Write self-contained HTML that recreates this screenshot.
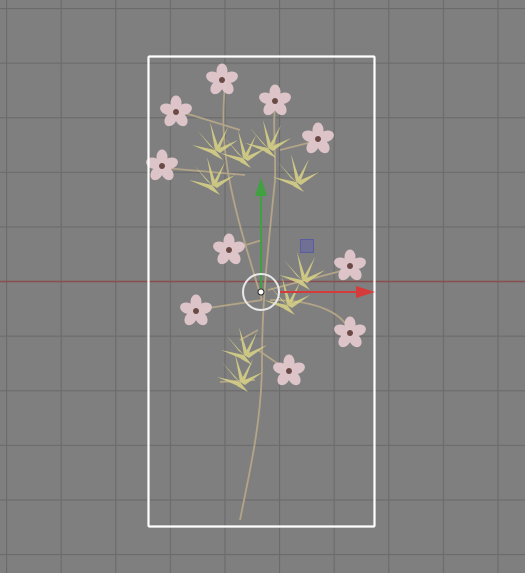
<!DOCTYPE html>
<html><head><style>
html,body{margin:0;padding:0;width:525px;height:573px;overflow:hidden;background:#7f7f7f}
</style></head><body>
<svg width="525" height="573" viewBox="0 0 525 573" xmlns="http://www.w3.org/2000/svg">
<defs>
<pattern id="g" x="6" y="8" width="54.6" height="54.6" patternUnits="userSpaceOnUse">
<path d="M0.5 0V54.6M0 0.5H54.6" stroke="#6b6b6b" stroke-width="1.3" fill="none"/>
</pattern>
<g id="fl"><g fill="#e2c8cd" opacity="0.95">
<ellipse cx="0" cy="-9" rx="5.5" ry="7.5"/><ellipse cx="0" cy="-9" rx="5.5" ry="7.5" transform="rotate(72)"/><ellipse cx="0" cy="-9" rx="5.5" ry="7.5" transform="rotate(144)"/><ellipse cx="0" cy="-9" rx="5.5" ry="7.5" transform="rotate(216)"/><ellipse cx="0" cy="-9" rx="5.5" ry="7.5" transform="rotate(288)"/></g>
<circle r="3" fill="#6b4a45"/></g>
<g id="sp" fill="#d6cf86" opacity="0.9">
<path d="M0 0L-18 -20L-5 -4Z"/><path d="M0 0L-5 -28L3 -4Z"/><path d="M0 0L13 -23L5 -2Z"/><path d="M0 0L23 -10L5 3Z"/><path d="M0 0L-23 -5L-2 4Z"/><path d="M0 0L8 10L-3 4Z"/></g>
</defs>
<rect width="525" height="573" fill="url(#g)"/>
<line x1="0" y1="281.5" x2="525" y2="281.5" stroke="#8a4e4e" stroke-width="1.5"/>
<g stroke="#b9a98a" stroke-width="1.8" fill="none" opacity="0.9">
<path d="M240 520C250 470 262 420 262 360C262 300 268 250 275 180"/>
<path d="M262 300C250 260 230 200 225 150C222 120 224 90 226 78"/>
<path d="M275 180C276 150 272 120 276 100"/>
<path d="M262 240L230 250M268 290L345 270M270 300C320 300 345 315 350 333"/>
<path d="M258 330L240 340M258 350L290 372M255 380L220 382M240 130L175 110M245 175L165 168"/>
<path d="M262 300L195 310M280 150L320 140"/>
</g>
<use href="#fl" x="222" y="80"/><use href="#fl" x="176" y="112"/>
<use href="#fl" x="275" y="101"/><use href="#fl" x="318" y="139"/>
<use href="#fl" x="162" y="166"/><use href="#fl" x="229" y="250"/>
<use href="#fl" x="350" y="266"/><use href="#fl" x="196" y="311"/>
<use href="#fl" x="350" y="333"/><use href="#fl" x="289" y="371"/>
<use href="#sp" x="215" y="150"/><use href="#sp" x="243" y="158"/><use href="#sp" x="268" y="148"/>
<use href="#sp" x="212" y="185"/><use href="#sp" x="296" y="182"/><use href="#sp" x="302" y="280"/>
<use href="#sp" x="287" y="305"/><use href="#sp" x="244" y="355"/><use href="#sp" x="240" y="382"/>
<rect x="148.5" y="56.5" width="226" height="470" fill="none" stroke="#fff" stroke-width="2.2" rx="1"/>
<line x1="261" y1="290" x2="261" y2="192" stroke="#3fa13f" stroke-width="2"/>
<path d="M255 196L261 178L267 196Z" fill="#3fa13f"/>
<line x1="280" y1="292" x2="360" y2="292" stroke="#d63b3b" stroke-width="2"/>
<path d="M356 286L375 292L356 298Z" fill="#d63b3b"/>
<rect x="300.5" y="239.5" width="13" height="13" fill="#6f7094" stroke="#5a5ca0"/>
<circle cx="261" cy="292" r="18" fill="none" stroke="#e8e8e8" stroke-width="2"/>
<circle cx="261" cy="292" r="3" fill="#fff" stroke="#222" stroke-width="1"/>
</svg>
</body></html>
